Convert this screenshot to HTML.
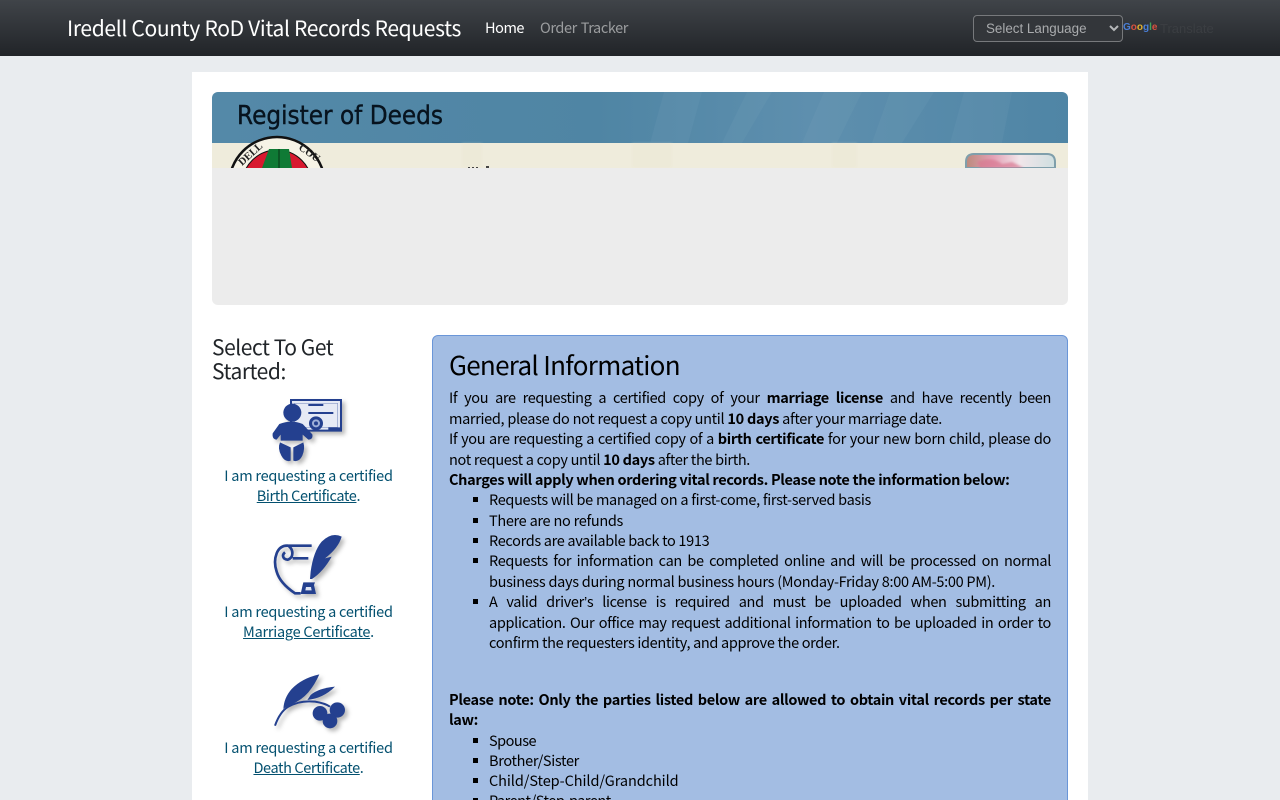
<!DOCTYPE html>
<html lang="en">
<head>
<meta charset="utf-8">
<title>Iredell County RoD Vital Records Requests</title>
<style>
html,body{margin:0;padding:0;width:1280px;height:800px;overflow:hidden;background:#e9ecef}
body{position:relative;font-family:"Noto Sans CJK SC","Liberation Sans",sans-serif;color:#000}
#nav{position:absolute;left:0;top:0;width:1280px;height:56px;background:linear-gradient(#404449,#212428)}
#card{position:absolute;left:192px;top:72px;width:896px;height:728px;background:#fff}
.a{position:absolute;white-space:nowrap}
.l{position:absolute;white-space:nowrap;height:20px;line-height:20px;font-size:14.5px;letter-spacing:-.33px;color:#000;text-align:justify;text-align-last:justify}
.l b{font-weight:700}
.s{position:absolute;left:473px;width:5px;height:5px;background:#000}
#ban{position:absolute;left:212px;top:92px;width:856px;height:213px;border-radius:6px;overflow:hidden;background:#ececec}
#box{position:absolute;left:432px;top:335px;width:634px;height:480px;background:#a3bde3;border:1px solid #6a96d8;border-radius:6px}
.c{position:absolute;left:212px;width:193px;text-align:center;height:20px;line-height:20px;font-size:14.5px;letter-spacing:-.25px;color:#03506f;white-space:nowrap}
.c u{color:#03506f;letter-spacing:-.38px}
</style>
</head>
<body>
<div id="nav"></div>
<div class="a" style="left:67px;top:13px;width:394px;line-height:30px;font-size:21px;letter-spacing:-.33px;color:#fff;text-align-last:justify">Iredell County RoD Vital Records Requests</div>
<div class="a" style="left:485px;top:18px;width:39px;line-height:20px;font-size:14.5px;letter-spacing:-.45px;color:#fff">Home</div>
<div class="a" style="left:540px;top:18px;width:88px;line-height:20px;font-size:14.5px;letter-spacing:-.4px;color:#9b9d9f;text-align-last:justify">Order Tracker</div>
<div class="a" style="left:973px;top:15px;width:148px;height:25px;border:1px solid #77797c;border-radius:4px;background:#33363a"></div>
<div class="a" style="left:986px;top:19px;line-height:20px;font-size:13.4px;font-family:'Liberation Sans',sans-serif;color:#a9abad">Select Language</div>
<svg class="a" style="left:1108px;top:24px" width="12" height="9" viewBox="0 0 12 9"><path d="M2 2l4 4 4-4" fill="none" stroke="#b5b7b9" stroke-width="2"/></svg>
<div class="a" style="left:1123px;top:21px;line-height:14px;font-size:10px;font-weight:700;font-family:'Liberation Sans',sans-serif"><span style="color:#4a7fd8">G</span><span style="color:#d8503f">o</span><span style="color:#e0b030">o</span><span style="color:#4a7fd8">g</span><span style="color:#3fa35a">l</span><span style="color:#d8503f">e</span></div>
<div class="a" style="left:1160px;top:20px;line-height:18px;font-size:13px;font-family:'Liberation Sans',sans-serif;color:#3b3e42">Translate</div>

<div id="card"></div>

<div id="ban">
<svg width="856" height="76" viewBox="0 0 856 76" style="position:absolute;left:0;top:0">
<defs>
<linearGradient id="bg" x1="0" x2="1" y1="0" y2="0"><stop offset="0" stop-color="#5489a8"/><stop offset=".45" stop-color="#4f85a4"/><stop offset=".7" stop-color="#5e8fae"/><stop offset="1" stop-color="#4f85a5"/></linearGradient>
<linearGradient id="fl" x1="0" x2="1" y1="0" y2="0"><stop offset="0" stop-color="#bb8a7c"/><stop offset=".3" stop-color="#e3a0b4"/><stop offset=".6" stop-color="#f1e6ea"/><stop offset="1" stop-color="#cfdfe0"/></linearGradient>
<filter id="bl"><feGaussianBlur stdDeviation="1"/></filter>
<clipPath id="sealclip"><rect x="0" y="40" width="856" height="36"/></clipPath>
</defs>
<rect width="856" height="51" fill="url(#bg)"/>
<path d="M438 51L452 0H490L476 51ZM510 51L535 0H560L530 51ZM590 51L612 0H650L625 51ZM660 51L678 0H722L690 51ZM738 51L752 0H800L790 51Z" fill="#fff" opacity=".035"/>
<rect y="51" width="856" height="25" fill="#efecdc"/>
<path d="M60 51h30v25H60zM250 51h20v25h-20zM420 51h40v25h-40zM620 51h25v25h-25z" fill="#e9e6d0" opacity=".3" filter="url(#bl)"/>
<text x="25" y="32" font-family="'DejaVu Sans',sans-serif" font-size="26" fill="#07131e" stroke="#07131e" stroke-width=".4" textLength="206" lengthAdjust="spacingAndGlyphs">Register of Deeds</text>
<g clip-path="url(#sealclip)">
<circle cx="65" cy="93" r="48" fill="#f6f3e6" stroke="#111" stroke-width="2.5"/>
<circle cx="65" cy="93" r="35" fill="#d8192f" stroke="#111" stroke-width="1"/>
<path d="M57 57H77L80 76H50Z" fill="#0f7a35"/>
<path d="M67 57v19" stroke="#0a4a20" stroke-width="1.5"/>
</g>
<text x="30" y="74" font-family="'Liberation Serif',serif" font-size="10.5" font-weight="700" fill="#222" transform="rotate(-42 30 74)">DELL</text>
<text x="86" y="57" font-family="'Liberation Serif',serif" font-size="10.5" font-weight="700" fill="#222" transform="rotate(35 86 57)">COU</text>
<path d="M256 76h2v-1h-2zM260 76h2v-1h-2zM264 76h2v-1h-2zM274 76h3v-2h-3z" fill="#444"/>
<path d="M754 76V70Q754 62 762 62H835Q843 62 843 70V76Z" fill="url(#fl)" stroke="#7f9fab" stroke-width="2"/>
<path d="M765 70Q780 64 790 72L800 70L812 76H768Z" fill="#d97892" opacity=".7" filter="url(#bl)"/>
</svg>
</div>

<div class="a" style="left:212px;top:335px;line-height:24px;font-size:21px;letter-spacing:-.45px;color:#212529">Select To Get<br>Started:</div>

<svg class="a" style="left:0;top:0;filter:drop-shadow(3px 3px 2px rgba(0,0,0,.28))" width="1280" height="800" viewBox="0 0 1280 800">
<g transform="translate(260 390) scale(.3333)" fill="#24408f">
<path d="M93 30H243V122H93Z" fill="#e6eaf5" stroke="#24408f" stroke-width="6"/>
<path d="M103 40H233V112H103Z" fill="none" stroke="#8899c8" stroke-width="2"/>
<path d="M145 42h45v6h-45zM145 66h75v6h-75zM205 112h40v10h-40z"/>
<circle cx="168" cy="100" r="21"/><circle cx="168" cy="100" r="12" fill="#9fb0d8"/><circle cx="168" cy="100" r="6"/>
<circle cx="97" cy="68" r="27"/>
<path d="M58 102Q95 88 128 102L157 133Q160 148 145 149L128 134V152H62V134L50 149Q36 148 38 130Z"/>
<path d="M60 157L92 172L92 212Q75 218 64 197Q52 175 60 157ZM130 157L100 172L100 212Q117 218 127 197Q136 175 130 157Z"/>
</g>
<g transform="translate(260 525) scale(.3333)">
<path d="M155 62H85Q60 60 50 85Q40 110 50 140Q60 175 105 205H122M85 62Q102 75 95 95Q85 110 72 100Q65 90 75 82M98 100H145" fill="none" stroke="#24408f" stroke-width="8"/>
<path d="M245 35Q215 20 185 50Q160 80 152 140L150 162L156 162Q190 140 215 95L195 100Q235 70 245 35Z" fill="#24408f"/>
<path d="M130 172H165L162 180L168 207H122L128 180Z" fill="#24408f"/>
<path d="M138 186H153L155 196H136Z" fill="#dfe5f3"/>
</g>
<g transform="translate(260 665) scale(.3333)" fill="#24408f">
<path d="M178 28Q125 40 95 72Q72 98 70 132Q78 125 95 118Q125 105 145 82Q165 58 178 28Z"/>
<path d="M225 65Q175 70 152 90L142 105Q190 100 225 65Z"/>
<path d="M45 182Q60 140 85 125Q120 105 165 110Q195 115 210 125" fill="none" stroke="#24408f" stroke-width="6"/>
<circle cx="180" cy="145" r="22"/><circle cx="232" cy="135" r="23"/><circle cx="210" cy="168" r="22"/>
</g>
</svg>

<div class="c" style="top:466px">I am requesting a certified</div>
<div class="c" style="top:486px"><u>Birth Certificate</u>.</div>
<div class="c" style="top:602px">I am requesting a certified</div>
<div class="c" style="top:622px"><u style="letter-spacing:-.25px">Marriage Certificate</u>.</div>
<div class="c" style="top:738px">I am requesting a certified</div>
<div class="c" style="top:758px"><u>Death Certificate</u>.</div>

<div id="box"></div>
<div class="a" style="left:449px;top:348px;line-height:34px;font-size:26px;letter-spacing:-.7px;color:#000">General Information</div>

<div class="l" style="left:449px;top:388px;width:602px">If you are requesting a certified copy of your <b>marriage license</b> and have recently been</div>
<div class="l" style="left:449px;top:409px;width:493px">married, please do not request a copy until <b>10 days</b> after your marriage date.</div>
<div class="l" style="left:449px;top:429px;width:602px">If you are requesting a certified copy of a <b>birth certificate</b> for your new born child, please do</div>
<div class="l" style="left:449px;top:450px;width:301px">not request a copy until <b>10 days</b> after the birth.</div>
<div class="l" style="left:449px;top:470px;width:560px"><b>Charges will apply when ordering vital records. Please note the information below:</b></div>

<div class="s" style="top:497px"></div>
<div class="l" style="left:489px;top:490px;width:382px">Requests will be managed on a first-come, first-served basis</div>
<div class="s" style="top:518px"></div>
<div class="l" style="left:489px;top:511px;width:134px">There are no refunds</div>
<div class="s" style="top:538px"></div>
<div class="l" style="left:489px;top:531px;width:220px">Records are available back to 1913</div>
<div class="s" style="top:558px"></div>
<div class="l" style="left:489px;top:551px;width:562px">Requests for information can be completed online and will be processed on normal</div>
<div class="l" style="left:489px;top:572px;width:506px">business days during normal business hours (Monday-Friday 8:00 AM-5:00 PM).</div>
<div class="s" style="top:599px"></div>
<div class="l" style="left:489px;top:592px;width:562px">A valid driver<span style="font-family:'Liberation Sans',sans-serif">’</span>s license is required and must be uploaded when submitting an</div>
<div class="l" style="left:489px;top:613px;width:562px">application. Our office may request additional information to be uploaded in order to</div>
<div class="l" style="left:489px;top:633px;width:350px">confirm the requesters identity, and approve the order.</div>

<div class="l" style="left:449px;top:690px;width:602px"><b>Please note: Only the parties listed below are allowed to obtain vital records per state</b></div>
<div class="l" style="left:449px;top:710px;width:28px"><b>law:</b></div>

<div class="s" style="top:738px"></div>
<div class="l" style="left:489px;top:731px;width:47px;letter-spacing:-.5px">Spouse</div>
<div class="s" style="top:758px"></div>
<div class="l" style="left:489px;top:751px;width:90px">Brother/Sister</div>
<div class="s" style="top:778px"></div>
<div class="l" style="left:489px;top:771px;width:177px;letter-spacing:-.08px">Child/Step-Child/Grandchild</div>
<div class="s" style="top:798px"></div>
<div class="l" style="left:489px;top:791px;width:122px;letter-spacing:-.5px">Parent/Step-parent</div>
</body>
</html>
